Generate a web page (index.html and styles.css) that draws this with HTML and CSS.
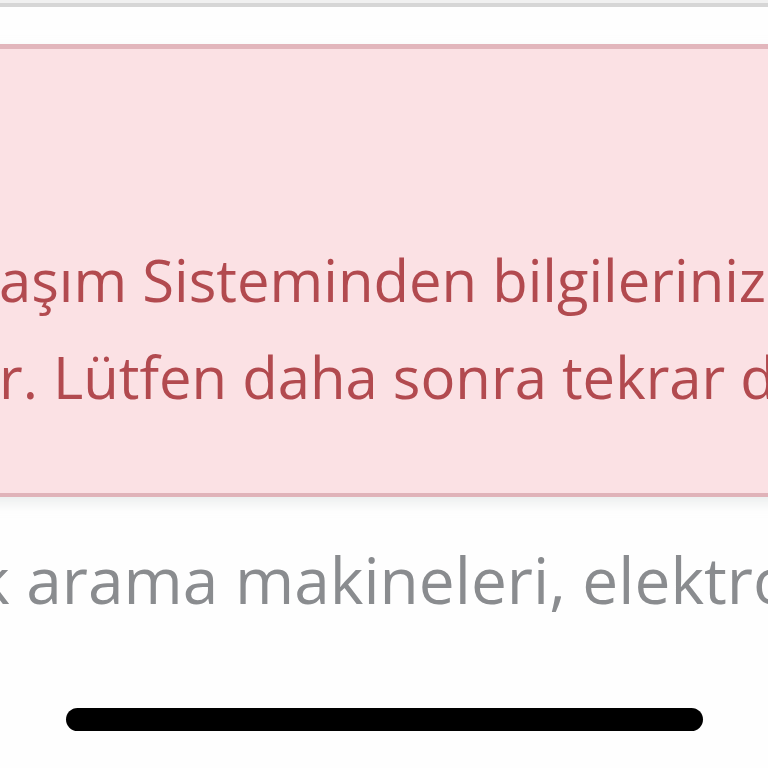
FILE: index.html
```html
<!DOCTYPE html>
<html lang="tr">
<head>
<meta charset="utf-8">
<link rel="stylesheet" href="styles.css">
</head>
<body>
<div class="page">
  <div class="topline"></div>
  <div class="alert">
    <p class="alert-line">aşım Sisteminden bilgilerinize ulaşılamamıştır.</p>
    <p class="alert-line line2">r. Lütfen daha sonra tekrar deneyiniz.</p>
  </div>
  <p class="desc">k arama makineleri, elektronik</p>
  <div class="homebar"></div>
</div>
</body>
</html>
```
FILE: styles.css
```css
html, body {
  margin: 0;
  padding: 0;
  background: #fefefe;
  overflow: hidden;
}
.page {
  width: 768px;
  height: 768px;
  overflow: hidden;
  display: flex;
  flex-direction: column;
  font-family: "Open Sans", "Noto Sans", sans-serif;
}
.topline {
  height: 3px;
  border-bottom: 4px solid #d6d6d6;
  background: #f0f0f0;
}
.alert {
  margin: 37px -20px 0 -20px;
  height: 444px;
  background: #fbe1e4;
  border-top: 5px solid #e2b6bc;
  border-bottom: 4px solid #e0b3b9;
  box-shadow: 0 6px 12px rgba(200, 210, 205, 0.35);
  padding: 0 0 0 19px;
  box-sizing: content-box;
  display: flex;
  flex-direction: column;
}
.alert-line {
  margin: 0;
  white-space: nowrap;
  font-size: 58px;
  line-height: 97px;
  color: #b24a4f;
}
.alert-line:first-child {
  margin-top: 182px;
}
.desc {
  margin: 40px 0 0 -24px;
  white-space: nowrap;
  font-size: 64px;
  line-height: 86px;
  color: #8a8c8f;
}
.homebar {
  margin: auto auto 37px auto;
  width: 637px;
  height: 23px;
  border-radius: 12px;
  background: #000;
}
```
